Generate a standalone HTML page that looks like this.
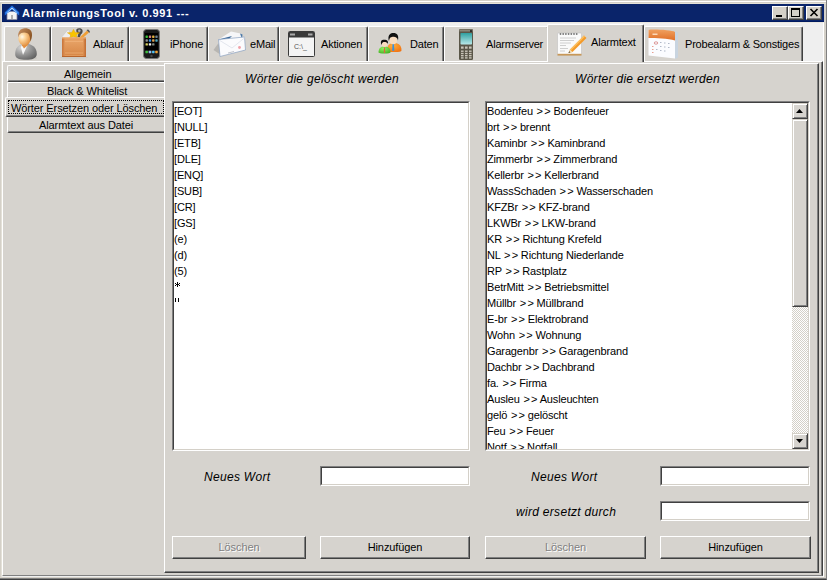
<!DOCTYPE html>
<html><head><meta charset="utf-8">
<style>
*{margin:0;padding:0;box-sizing:border-box}
html,body{width:829px;height:580px;overflow:hidden;background:#fff}
body{position:relative;font-family:"Liberation Sans",sans-serif;font-size:11px;color:#000}
.a{position:absolute}
svg{position:absolute;overflow:visible}
#win{left:0;top:0;width:827px;height:580px;background:#d4d0c8;border-right:1px solid #808080;border-bottom:1px solid #404040;box-shadow:inset 0 -1px 0 #808080}
#title{left:2px;top:4px;width:822px;height:18px;background:#0a246a;border-bottom:1px solid #001a60}
#title .t{left:20px;top:2px;color:#fff;font-weight:bold;font-size:11px;letter-spacing:0.62px;white-space:nowrap;line-height:14px}
.tb{width:16px;height:14px;top:2px;background:#d4d0c8;border-top:1px solid #fff;border-left:1px solid #fff;border-right:1px solid #404040;border-bottom:1px solid #404040;box-shadow:inset -1px -1px 0 #808080}
#client{left:2px;top:22px;width:822px;height:555px;background:#efefef;border-top:1px solid #e9e6df;border-right:1px solid #fff}
.tab{top:26px;height:36px;background:#d6d3ce;border-top:1px solid #fff;border-left:1px solid #fff;border-right:1px solid #404040;box-shadow:inset -1px 0 0 #808080;border-radius:2px 2px 0 0}
.lb{position:absolute;white-space:nowrap;font-size:11px;line-height:13px;letter-spacing:-0.2px}
#page{left:2px;top:61px;width:821px;height:515px;background:#d6d3ce;border-top:1px solid #fff;border-left:1px solid #fff;border-right:1px solid #404040;border-bottom:1px solid #808080;box-shadow:inset -1px 0 0 #808080}
.nav{left:7px;width:160px;height:17px;background:#d6d3ce;border-top:1px solid #fff;border-left:1px solid #fff;border-bottom:1px solid #404040;box-shadow:inset 0 -1px 0 #808080;border-radius:2px 0 0 2px}
.nav span{position:absolute;white-space:nowrap;line-height:13px;letter-spacing:-0.1px}
#content{left:164px;top:63px;width:655px;height:510px;background:#d6d3ce;border-top:1px solid #fff;border-left:1px solid #fff;border-right:1px solid #404040;border-bottom:1px solid #404040;box-shadow:inset -1px -1px 0 #808080}
.lbl{font-style:italic;font-size:12px;white-space:nowrap;letter-spacing:0.3px;line-height:14px}
.list{background:#fff;border-top:1px solid #808080;border-left:1px solid #808080;border-right:1px solid #fff;border-bottom:1px solid #fff;overflow:hidden}
.list .in{position:absolute;left:0;top:0;right:0;bottom:0;border-top:1px solid #404040;border-left:1px solid #404040;border-right:1px solid #d4d0c8;border-bottom:1px solid #d4d0c8;overflow:hidden}
.list .it{position:absolute;left:0px;height:16px;line-height:16px;white-space:nowrap;letter-spacing:-0.15px}
.inp{background:#fff;border-top:1px solid #808080;border-left:1px solid #808080;border-right:1px solid #fff;border-bottom:1px solid #fff}
.inp .in{position:absolute;left:0;top:0;right:0;bottom:0;border-top:1px solid #404040;border-left:1px solid #404040;border-right:1px solid #d4d0c8;border-bottom:1px solid #d4d0c8}
.btn{height:23px;background:#d6d3ce;border-top:1px solid #fff;border-left:1px solid #fff;border-right:1px solid #404040;border-bottom:1px solid #404040;box-shadow:inset -1px -1px 0 #808080;text-align:center;line-height:20px;white-space:nowrap;letter-spacing:-0.1px}
.dis{color:#808080;text-shadow:1px 1px 0 #fff}
.sb{position:absolute;background:#d6d3ce;border-top:1px solid #d4d0c8;border-left:1px solid #d4d0c8;border-right:1px solid #404040;border-bottom:1px solid #404040;box-shadow:inset 1px 1px 0 #fff,inset -1px -1px 0 #808080}
.gg{margin-left:0.8px;letter-spacing:1.2px}

</style></head><body>
<div class="a" id="win"></div>
<div class="a" style="left:0;top:1px;width:826px;height:1px;background:#fff"></div>
<div class="a" style="left:1px;top:3px;width:825px;height:1px;background:#e4e1d8"></div>
<div class="a" style="left:1px;top:3px;width:1px;height:574px;background:#e4e1d8"></div>
<div class="a" id="client"></div>
<div class="a" id="title">
  <div class="a t">AlarmierungsTool v. 0.991 ---</div>
  <div class="a tb" style="left:770px"><div class="a" style="left:3px;top:8px;width:6px;height:2px;background:#000"></div></div>
  <div class="a tb" style="left:786px"><div class="a" style="left:2px;top:1px;width:9px;height:9px;border:1px solid #000;border-top-width:2px"></div></div>
  <div class="a tb" style="left:804px"><svg style="left:0;top:0" width="14" height="12" viewBox="0 0 14 12"><path d="M3.5,2 L10.5,9 M10.5,2 L3.5,9" stroke="#000" stroke-width="1.6"/></svg></div>
</div>
<svg style="left:4px;top:5px" width="16" height="16" viewBox="0 0 16 16">
  <defs><linearGradient id="roof" x1="0" y1="0" x2="0" y2="1"><stop offset="0" stop-color="#e8f4ff"/><stop offset="1" stop-color="#7ab8f8"/></linearGradient></defs>
  <rect x="3" y="6.5" width="10" height="8" fill="#f4f4f4"/>
  <rect x="2.6" y="9" width="0.8" height="5.5" fill="#8080a0"/><rect x="12.6" y="9" width="0.8" height="5.5" fill="#8080a0"/>
  <rect x="3" y="14" width="10" height="0.8" fill="#9090a0"/>
  <rect x="7" y="10" width="2" height="4" fill="#b0b0b0"/>
  <path d="M0.8,7.2 L8,0.6 L15.2,7.2 L15.2,10.6 L8,4.6 L0.8,10.6 Z" fill="#1f6fe0"/>
  <path d="M2.5,7.6 L8,2.4 L13.5,7.6 L13.5,8.4 L8,3.8 L2.5,8.4 Z" fill="url(#roof)"/>
</svg>

<!-- tabs -->
<div class="a tab" style="left:4px;width:47px"></div>
<div class="a tab" style="left:51px;width:78px"><span class="lb" style="left:41px;top:11px">Ablauf</span></div>
<div class="a tab" style="left:129px;width:79px"><span class="lb" style="left:40px;top:11px">iPhone</span></div>
<div class="a tab" style="left:208px;width:71px"><span class="lb" style="left:41px;top:11px">eMail</span></div>
<div class="a tab" style="left:279px;width:89px"><span class="lb" style="left:41px;top:11px">Aktionen</span></div>
<div class="a tab" style="left:368px;width:76px"><span class="lb" style="left:41px;top:11px">Daten</span></div>
<div class="a tab" style="left:444px;width:105px"><span class="lb" style="left:41px;top:11px">Alarmserver</span></div>
<div class="a tab" style="left:644px;width:159px"><span class="lb" style="left:40px;top:11px">Probealarm &amp; Sonstiges</span></div>
<div class="a" id="page"></div>
<div class="a tab" style="left:547px;top:24px;width:97px;height:38px;z-index:2"><span class="lb" style="left:43px;top:11px">Alarmtext</span></div>

<!-- nav -->
<div class="a nav" style="top:65px"><span style="left:56px;top:2px">Allgemein</span></div>
<div class="a nav" style="top:82px"><span style="left:39px;top:2px">Black &amp; Whitelist</span></div>
<div class="a nav" style="top:116px"><span style="left:31px;top:2px">Alarmtext aus Datei</span></div>
<div class="a nav" style="top:97px;left:5px;width:162px;height:20px"><span style="left:5px;top:4px">Wörter Ersetzen oder Löschen</span><div class="a" style="left:2px;top:2px;width:156px;height:14px;border:1px dotted #000"></div></div>

<div class="a" id="content"></div>
<div class="a lbl" style="left:245px;top:72px">Wörter die gelöscht werden</div>
<div class="a lbl" style="left:575px;top:72px">Wörter die ersetzt werden</div>
<!-- person -->
<svg style="left:10px;top:28px;z-index:3" width="32" height="32" viewBox="0 0 32 32">
 <defs>
  <radialGradient id="pg1" cx="0.3" cy="0.25" r="0.9"><stop offset="0" stop-color="#d8d8d8"/><stop offset="0.45" stop-color="#9a9a9a"/><stop offset="1" stop-color="#5a5a5a"/></radialGradient>
  <radialGradient id="pf1" cx="0.3" cy="0.35" r="0.75"><stop offset="0" stop-color="#fff8e8"/><stop offset="0.35" stop-color="#fcd49a"/><stop offset="1" stop-color="#e08a38"/></radialGradient>
  <linearGradient id="ph1" x1="0" y1="0" x2="1" y2="0.6"><stop offset="0" stop-color="#c89060"/><stop offset="1" stop-color="#8a5424"/></linearGradient>
 </defs>
 <ellipse cx="23" cy="30" rx="4" ry="1.2" fill="#c4c2bc" opacity="0.7"/>
 <path d="M5.2,26.5 C5,20 8.5,16 15.5,15.6 C22.5,16 26.8,20 26.8,26 C26.8,30.5 22,31.8 16,31.8 C10,31.8 5.4,30.8 5.2,26.5 Z" fill="url(#pg1)"/>
 <path d="M11.5,17.5 L17.5,17 L13,27 L11,19.5 Z" fill="#f8f8f8"/>
 <path d="M12,13.5 L18,13.5 L17.8,17.2 L14,20.5 L12,17.5 Z" fill="#e49040"/>
 <ellipse cx="14.6" cy="10.8" rx="6.2" ry="6.8" fill="url(#pf1)"/>
 <path d="M8.3,9.5 C7.6,3.5 10.5,0.4 15,0.3 C19.5,0.3 22.4,2.6 22,7.5 C21.8,10 21.2,12 20.3,13.5 C20.2,9.5 19.6,6.5 17.5,5.2 C15,4 11,4 9,7 Z" fill="url(#ph1)"/>
</svg>
<!-- box -->
<svg style="left:56px;top:27px;z-index:3" width="34" height="32" viewBox="0 0 34 32">
 <defs>
  <linearGradient id="bx" x1="0" y1="0" x2="1" y2="0"><stop offset="0" stop-color="#c8743a"/><stop offset="0.15" stop-color="#e29a5c"/><stop offset="0.85" stop-color="#e29a5c"/><stop offset="1" stop-color="#c06a30"/></linearGradient>
  <linearGradient id="bx2" x1="0" y1="0" x2="0" y2="1"><stop offset="0" stop-color="#e8a468"/><stop offset="1" stop-color="#d88848"/></linearGradient>
 </defs>
 <ellipse cx="18" cy="30.5" rx="14" ry="1.5" fill="#c8c6c0" opacity="0.6"/>
 <path d="M4.5,11.5 L12.5,2 L15.5,11.5 Z" fill="#eeeeee" stroke="#c4c4c4" stroke-width="0.5"/>
 <path d="M20.5,2.3 C22,0.6 25,0.8 26.2,2.6 C27.2,4.3 26.5,6.5 24.8,7.4 L23.8,10.5 L21.5,10 L22.3,6.8 C20.5,5.8 19.8,3.8 20.5,2.3 Z" fill="#4a4a4a"/>
 <circle cx="23.3" cy="3.8" r="1.3" fill="#b0b0b0"/>
 <path d="M17.5,2.3 L19.2,5.4 L23.7,5.7 L20.3,7.9 L21.3,11.1 L17.5,9.4 L13.7,11.1 L14.7,7.9 L11.3,5.7 L15.8,5.4 Z" fill="#f8c400" stroke="#e0a000" stroke-width="0.4"/>
 <path d="M22.5,11.5 L31,3.5 L33,5.5 L25,12.5 Z" fill="#f0a038"/>
 <path d="M30.5,3 L33.5,6 L33.8,4.2 L32.2,2.6 Z" fill="#505050"/>
 <rect x="6" y="10.5" width="24" height="19.5" fill="url(#bx)"/>
 <rect x="8.5" y="12.5" width="19" height="15.5" fill="url(#bx2)"/>
 <path d="M6,10.5 L30,10.5 L30,11.5 L6,11.5 Z" fill="#f0b070"/>
 <path d="M6,29 L30,29 L30,30 L6,30 Z" fill="#b8642a"/>
 <path d="M9,14.5 L27,14.5 M9,26 L27,26" stroke="#f0b47c" stroke-width="0.7"/>
</svg>
<!-- iphone -->
<svg style="left:143px;top:29px;z-index:3" width="17" height="30" viewBox="0 0 17 30">
 <rect x="0.5" y="0.5" width="16" height="29" rx="3" fill="#1a1a1a" stroke="#777" stroke-width="1"/>
 <rect x="2" y="4" width="13" height="20.5" fill="#000"/>
 <rect x="2.5" y="6.5" width="2.4" height="2.4" rx="0.6" fill="#3ac03a"/><rect x="5.8" y="6.5" width="2.4" height="2.4" rx="0.6" fill="#d08080"/><rect x="9.1" y="6.5" width="2.4" height="2.4" rx="0.6" fill="#e0b040"/><rect x="12.3" y="6.5" width="2.4" height="2.4" rx="0.6" fill="#708090"/>
 <rect x="2.5" y="10.3" width="2.4" height="2.4" rx="0.6" fill="#909090"/><rect x="5.8" y="10.3" width="2.4" height="2.4" rx="0.6" fill="#3a90e0"/><rect x="9.1" y="10.3" width="2.4" height="2.4" rx="0.6" fill="#e0a050"/><rect x="12.3" y="10.3" width="2.4" height="2.4" rx="0.6" fill="#50a8c0"/>
 <rect x="2.5" y="14.2" width="2.4" height="2.4" rx="0.6" fill="#d8d060"/><rect x="5.8" y="14.2" width="2.4" height="2.4" rx="0.6" fill="#f0f0f0"/><rect x="9.1" y="14.2" width="2.4" height="2.4" rx="0.6" fill="#808880"/>
 <rect x="2" y="21.5" width="13" height="3" fill="#333"/>
 <rect x="2.5" y="21.8" width="2.4" height="2.4" rx="0.6" fill="#3ac03a"/><rect x="5.8" y="21.8" width="2.4" height="2.4" rx="0.6" fill="#90c0f0"/><rect x="9.1" y="21.8" width="2.4" height="2.4" rx="0.6" fill="#50c0f0"/><rect x="12.3" y="21.8" width="2.4" height="2.4" rx="0.6" fill="#f0a030"/>
 <circle cx="8.5" cy="27" r="1.2" fill="#444"/>
</svg>
<!-- envelope -->
<svg style="left:212px;top:29px;z-index:3" width="36" height="30" viewBox="0 0 36 30">
 <path d="M1.5,21 L6.5,14 L9,26 Z" fill="#b8b6b2"/>
 <path d="M6.5,10.5 L19,2.5 L28.5,4.5 L33,13 Z" fill="#f6f6f8"/>
 <path d="M6.5,10.5 L20,7 L13,14 Z" fill="#3a6898"/>
 <path d="M28,4.5 L30.5,5.5 L30,10 Z" fill="#4a78a8"/>
 <path d="M6.5,10.5 L32.5,8 L33.5,21 L8,27.5 Z" fill="#fbfbfd" stroke="#8aa0c0" stroke-width="0.7"/>
 <path d="M7,11 L20,19 L33,8.5" fill="none" stroke="#d8dce6" stroke-width="0.7"/>
 <circle cx="27.5" cy="18.5" r="1.4" fill="#f0a0a8"/>
 <path d="M16,24 L22,22.5" stroke="#b0b4bc" stroke-width="0.8"/>
</svg>
<!-- console -->
<svg style="left:288px;top:31px;z-index:3" width="27" height="26" viewBox="0 0 27 26">
 <rect x="0.5" y="0.5" width="26" height="25" rx="1" fill="#f4f4f4" stroke="#3a3a3a" stroke-width="1"/>
 <rect x="1" y="1" width="25" height="5.5" fill="#3a3a3a"/>
 <rect x="2" y="2.5" width="5" height="2" fill="#aaa"/><rect x="20" y="2.5" width="4.5" height="2" fill="#aaa"/>
 <text x="6" y="18" font-family="Liberation Sans" font-size="7" fill="#555">C:\_</text>
</svg>
<!-- daten persons -->
<svg style="left:378px;top:33px;z-index:3" width="24" height="21" viewBox="0 0 24 21">
 <defs>
  <radialGradient id="og" cx="0.4" cy="0.3" r="0.8"><stop offset="0" stop-color="#ffb040"/><stop offset="1" stop-color="#f07010"/></radialGradient>
  <radialGradient id="gg" cx="0.4" cy="0.3" r="0.8"><stop offset="0" stop-color="#90f060"/><stop offset="1" stop-color="#40b020"/></radialGradient>
 </defs>
 <path d="M9,18 C9,12 11.5,10 16,10 C20.5,10 23.5,12 23.5,17.5 C23.5,18.5 21,19 16,19 C11,19 9,18.5 9,18 Z" fill="url(#og)"/>
 <path d="M14.5,11 L16,11 L16.3,17.5 L15,18 L14.2,17.5 Z" fill="#3a90e0"/>
 <ellipse cx="15.2" cy="7" rx="3.8" ry="4.2" fill="#f8dcc0"/>
 <path d="M10.5,6.5 C10,1.5 12.5,0 15.5,0 C19,0 21,2 20,7.5 C19.5,5 18,3.8 15.5,3.8 C13,3.8 11.5,4.5 11,8 Z" fill="#111"/>
 <path d="M0.5,19.5 C0.5,15 3,13.5 6.5,13.5 C10,13.5 12.5,15 12.5,19.5 C12.5,20 10,20.5 6.5,20.5 C3,20.5 0.5,20 0.5,19.5 Z" fill="url(#gg)"/>
 <path d="M6,14.5 L7,14.5 L7.2,19.5 L6.5,20 L5.8,19.5 Z" fill="#e06040"/>
 <ellipse cx="6.5" cy="11" rx="2.9" ry="3" fill="#f8dcc0"/>
 <path d="M3,10.5 C2.5,7 4.5,6.8 6.5,6.8 C9,6.8 10.5,8 9.8,11 C9.3,9.5 8,9 6.5,9 C5,9 4,9.5 3.6,12 Z" fill="#111"/>
</svg>
<!-- cell phone -->
<svg style="left:459px;top:29px;z-index:3" width="14" height="31" viewBox="0 0 14 31">
 <defs><linearGradient id="scr" x1="0" y1="0" x2="0" y2="1"><stop offset="0" stop-color="#30a0a0"/><stop offset="1" stop-color="#b8e8e8"/></linearGradient></defs>
 <rect x="0" y="0" width="14" height="31" rx="1.2" fill="#5a5648"/>
 <rect x="0.5" y="0.5" width="13" height="2" fill="#8a8678"/>
 <circle cx="12" cy="2" r="0.9" fill="#111"/>
 <rect x="1.5" y="4" width="11.5" height="11.5" rx="0.8" fill="url(#scr)"/>
 <g fill="#c8c4b8"><rect x="2" y="17.5" width="2.6" height="2.2"/><rect x="6" y="17.5" width="2.6" height="2.2"/><rect x="10" y="17.5" width="2.6" height="2.2"/>
 <rect x="2" y="21.5" width="2.6" height="1.4"/><rect x="6" y="21.5" width="2.6" height="1.4"/><rect x="10" y="21.5" width="2.6" height="1.4"/>
 <rect x="2" y="23.8" width="2.6" height="1.4"/><rect x="6" y="23.8" width="2.6" height="1.4"/><rect x="10" y="23.8" width="2.6" height="1.4"/>
 <rect x="2" y="26" width="2.6" height="1.4"/><rect x="6" y="26" width="2.6" height="1.4"/><rect x="10" y="26" width="2.6" height="1.4"/>
 <rect x="2" y="28.2" width="2.6" height="1.4"/><rect x="6" y="28.2" width="2.6" height="1.4"/><rect x="10" y="28.2" width="2.6" height="1.4"/></g>
</svg>
<!-- notepad -->
<svg style="left:557px;top:31px;z-index:3" width="30" height="25" viewBox="0 0 30 25">
 <rect x="0.5" y="2" width="24" height="22.5" rx="1" fill="#fafafa" stroke="#c0c0c0" stroke-width="0.6"/>
 <rect x="0.5" y="22.8" width="24" height="1.8" fill="#c89858"/>
 <g fill="#777"><circle cx="3.5" cy="3" r="0.9"/><circle cx="6.2" cy="3" r="0.9"/><circle cx="8.9" cy="3" r="0.9"/><circle cx="11.6" cy="3" r="0.9"/><circle cx="14.3" cy="3" r="0.9"/><circle cx="17" cy="3" r="0.9"/><circle cx="19.7" cy="3" r="0.9"/></g>
 <g stroke="#c4c4c4" stroke-width="0.8"><path d="M3,7 L19,7 M3,9.5 L17,9.5 M3,12 L14,12 M3,14.5 L9,14.5 M3,17.5 L11,17.5 M3,20 L8,20"/></g>
 <path d="M11.5,22 L13,18.5 L27,4.5 L29.5,7 L15.5,21 Z" fill="#f49a28"/>
 <path d="M13,18.5 L27,4.5 L28,5.5 L14,19.5 Z" fill="#fcc060"/>
 <path d="M11.5,22 L13,18.5 L15.5,21 Z" fill="#f0dcb0"/>
 <path d="M11.5,22 L12.2,20.3 L13.3,21.3 Z" fill="#333"/>
</svg>
<!-- calendar -->
<svg style="left:648px;top:29px;z-index:3" width="31" height="30" viewBox="0 0 31 30">
 <defs><linearGradient id="ch" x1="0" y1="0" x2="0" y2="1"><stop offset="0" stop-color="#f0a060"/><stop offset="1" stop-color="#e07028"/></linearGradient></defs>
 <path d="M27,2 L30,3.5 L30,28.5 L27,30 Z" fill="#c8d4e0"/>
 <path d="M0.5,1 L27,3 L27,29.5 L0.5,26.5 Z" fill="#fbfcff"/>
 <path d="M0.5,1 C4,0 24,1 27,3 L27,11.5 C20,9.5 8,9 0.5,9 Z" fill="url(#ch)"/>
 <rect x="4.5" y="4.5" width="5" height="1.5" fill="#fbd8b8"/>
 <ellipse cx="8" cy="14" rx="1.8" ry="1.2" fill="none" stroke="#d07070" stroke-width="0.7"/>
 <g fill="#b0b8c8"><rect x="12" y="13" width="1.5" height="1"/><rect x="16" y="13.5" width="1.5" height="1"/><rect x="20" y="14" width="1.5" height="1"/><rect x="12" y="17" width="1.5" height="1"/><rect x="16" y="17.5" width="1.5" height="1"/><rect x="20" y="18" width="1.5" height="1"/><rect x="8" y="20" width="1.5" height="1"/><rect x="12" y="21" width="1.5" height="1"/><rect x="16" y="21.5" width="1.5" height="1"/></g>
 <g fill="#e8a090"><rect x="4" y="17" width="1.5" height="1"/><rect x="4" y="20" width="1.5" height="1"/><rect x="4" y="23" width="1.5" height="1"/></g>
</svg>
<div class="a list" style="left:172px;top:101px;width:298px;height:350px"><div class="in">
<div class="it" style="top:0px">[EOT]</div>
<div class="it" style="top:16px">[NULL]</div>
<div class="it" style="top:32px">[ETB]</div>
<div class="it" style="top:48px">[DLE]</div>
<div class="it" style="top:64px">[ENQ]</div>
<div class="it" style="top:80px">[SUB]</div>
<div class="it" style="top:96px">[CR]</div>
<div class="it" style="top:112px">[GS]</div>
<div class="it" style="top:128px">(e)</div>
<div class="it" style="top:144px">(d)</div>
<div class="it" style="top:160px">(5)</div>
<svg style="left:1px;top:179px" width="5" height="5" viewBox="0 0 5 5" shape-rendering="crispEdges"><path fill="#000" d="M2,0h1v5h-1z M0,1h1v1h-1z M4,1h1v1h-1z M1,2h3v1h-3z M0,3h1v1h-1z M4,3h1v1h-1z"/></svg>
<svg style="left:1px;top:195px" width="4" height="4" viewBox="0 0 4 4" shape-rendering="crispEdges"><path fill="#000" d="M0,0h1v4h-1z M3,0h1v4h-1z"/></svg>
</div></div>
<div class="a list" style="left:485px;top:101px;width:325px;height:350px"><div class="in">
<div class="it" style="top:0px">Bodenfeu <span class="gg">&gt;</span>&gt; Bodenfeuer</div>
<div class="it" style="top:16px">brt <span class="gg">&gt;</span>&gt; brennt</div>
<div class="it" style="top:32px">Kaminbr <span class="gg">&gt;</span>&gt; Kaminbrand</div>
<div class="it" style="top:48px">Zimmerbr <span class="gg">&gt;</span>&gt; Zimmerbrand</div>
<div class="it" style="top:64px">Kellerbr <span class="gg">&gt;</span>&gt; Kellerbrand</div>
<div class="it" style="top:80px">WassSchaden <span class="gg">&gt;</span>&gt; Wasserschaden</div>
<div class="it" style="top:96px">KFZBr <span class="gg">&gt;</span>&gt; KFZ-brand</div>
<div class="it" style="top:112px">LKWBr <span class="gg">&gt;</span>&gt; LKW-brand</div>
<div class="it" style="top:128px">KR <span class="gg">&gt;</span>&gt; Richtung Krefeld</div>
<div class="it" style="top:144px">NL <span class="gg">&gt;</span>&gt; Richtung Niederlande</div>
<div class="it" style="top:160px">RP <span class="gg">&gt;</span>&gt; Rastplatz</div>
<div class="it" style="top:176px">BetrMitt <span class="gg">&gt;</span>&gt; Betriebsmittel</div>
<div class="it" style="top:192px">Müllbr <span class="gg">&gt;</span>&gt; Müllbrand</div>
<div class="it" style="top:208px">E-br <span class="gg">&gt;</span>&gt; Elektrobrand</div>
<div class="it" style="top:224px">Wohn <span class="gg">&gt;</span>&gt; Wohnung</div>
<div class="it" style="top:240px">Garagenbr <span class="gg">&gt;</span>&gt; Garagenbrand</div>
<div class="it" style="top:256px">Dachbr <span class="gg">&gt;</span>&gt; Dachbrand</div>
<div class="it" style="top:272px">fa. <span class="gg">&gt;</span>&gt; Firma</div>
<div class="it" style="top:288px">Ausleu <span class="gg">&gt;</span>&gt; Ausleuchten</div>
<div class="it" style="top:304px">gelö <span class="gg">&gt;</span>&gt; gelöscht</div>
<div class="it" style="top:320px">Feu <span class="gg">&gt;</span>&gt; Feuer</div>
<div class="it" style="top:336px">Notf <span class="gg">&gt;</span>&gt; Notfall</div>
<div class="a" style="right:0;top:0;width:16px;bottom:0;background-color:#fff;background-image:linear-gradient(45deg,#d4d0c8 25%,transparent 25%,transparent 75%,#d4d0c8 75%),linear-gradient(45deg,#d4d0c8 25%,transparent 25%,transparent 75%,#d4d0c8 75%);background-size:2px 2px;background-position:0 0,1px 1px"></div>
<div class="sb" style="right:0;top:0;width:16px;height:16px"><svg style="left:3px;top:5px" width="7" height="4" viewBox="0 0 7 4"><path d="M3.5,0 L7,4 L0,4 Z" fill="#000"/></svg></div>
<div class="sb" style="right:0;top:16px;width:16px;height:188px"></div>
<div class="sb" style="right:0;bottom:0;width:16px;height:16px"><svg style="left:3px;top:5px" width="7" height="4" viewBox="0 0 7 4"><path d="M0,0 L7,0 L3.5,4 Z" fill="#000"/></svg></div>
</div></div>
<div class="a lbl" style="left:204px;top:470px">Neues Wort</div>
<div class="a inp" style="left:320px;top:466px;width:150px;height:20px"><div class="in"></div></div>
<div class="a lbl" style="left:531px;top:470px">Neues Wort</div>
<div class="a inp" style="left:660px;top:466px;width:150px;height:20px"><div class="in"></div></div>
<div class="a lbl" style="left:516px;top:505px">wird ersetzt durch</div>
<div class="a inp" style="left:660px;top:501px;width:150px;height:20px"><div class="in"></div></div>
<div class="a btn dis" style="left:172px;top:536px;width:134px">Löschen</div>
<div class="a btn" style="left:320px;top:536px;width:150px">Hinzufügen</div>
<div class="a btn dis" style="left:485px;top:536px;width:161px">Löschen</div>
<div class="a btn" style="left:660px;top:536px;width:151px">Hinzufügen</div>
</body></html>
